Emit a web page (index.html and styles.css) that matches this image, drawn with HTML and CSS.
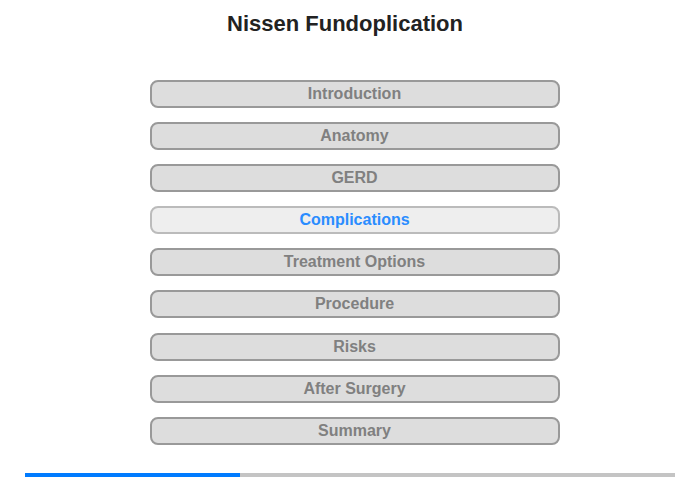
FILE: index.html
```html
<html>
<head>
    <link rel="stylesheet" href="styles.css">
</head>
<body>
    <div class="page">
        <h1 class="title">Nissen Fundoplication</h1>

        <!-- Chapter menu -->
        <div class="menu">
            <div class="menu-item">Introduction</div>
            <div class="menu-item">Anatomy</div>
            <div class="menu-item">GERD</div>
            <div class="menu-item active">Complications</div>
            <div class="menu-item">Treatment Options</div>
            <div class="menu-item">Procedure</div>
            <div class="menu-item">Risks</div>
            <div class="menu-item">After Surgery</div>
            <div class="menu-item">Summary</div>
        </div>

        <div class="progress">
            <div class="progress-fill" style="width: 33%"></div>
        </div>
    </div>
</body>
</html>
```

FILE: styles.css
```css
body {
    margin: 0;
    font-family: "Liberation Sans", Arial, Helvetica, sans-serif;
    background-color: #fff;
}
.page {
    width: 700px;
    height: 480px;
    display: flex;
    flex-direction: column;
    align-items: center;
}
.title {
    font-size: 22px;
    font-weight: bold;
    color: #222;
    margin: 11px 0 0 -10px;
    line-height: 26px;
}
.menu {
    display: flex;
    flex-direction: column;
    gap: 14.1px;
    margin-top: 43px;
    margin-left: 9px;
}
.menu-item {
    width: 406px;
    height: 24px;
    line-height: 24px;
    border: 2px solid #999;
    border-radius: 8px;
    background-color: #ddd;
    color: #808080;
    font-size: 16px;
    font-weight: bold;
    text-align: center;
}
.menu-item.active {
    background-color: #eee;
    border-color: #bbb;
    color: #2a8cff;
}
.progress {
    width: 650px;
    height: 4px;
    margin-top: 28px;
    background-color: #c4c4c4;
}
.progress-fill {
    height: 100%;
    background-color: #007bff;
}
```
